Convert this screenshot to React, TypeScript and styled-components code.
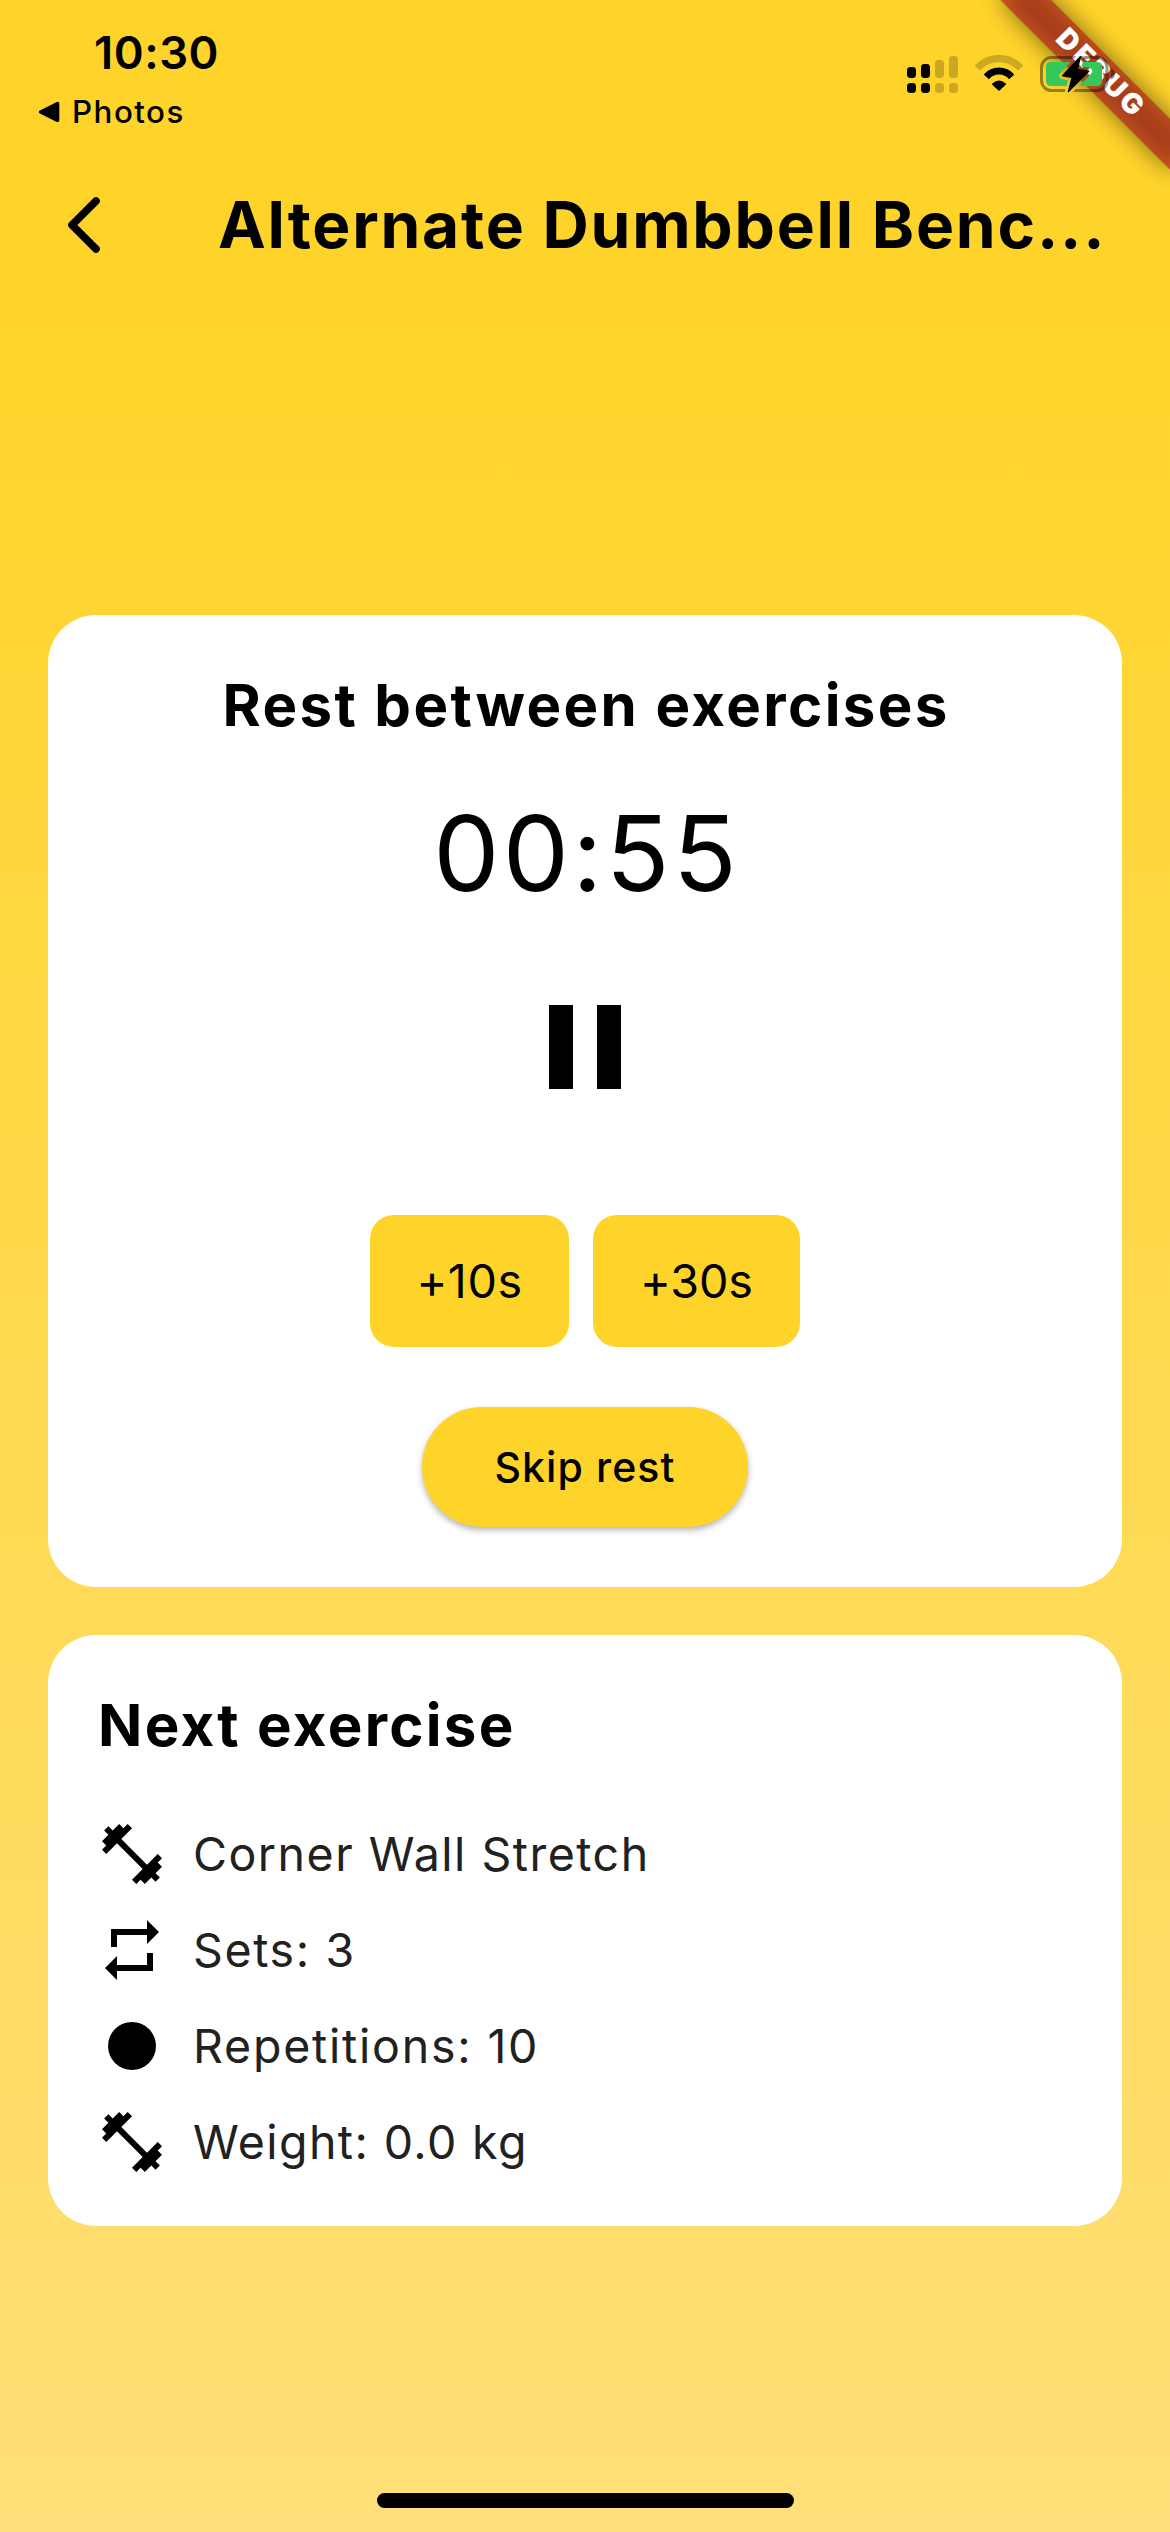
import React from "react";
import styled, { createGlobalStyle } from "styled-components";
import { MdFitnessCenter, MdPause, MdRepeat, MdFiberManualRecord } from "react-icons/md";
import type { IconType } from "react-icons";

const YELLOW = "#ffd42a";

const GlobalStyle = createGlobalStyle`
  *, *::before, *::after { box-sizing: border-box; }
  body {
    margin: 0;
    font-family: Inter, "Liberation Sans", sans-serif;
    color: #000;
  }
  button {
    border: 0;
    padding: 0;
    background: none;
    font: inherit;
    color: inherit;
  }
  svg { display: block; flex: none; }
`;

const Screen = styled.div`
  position: relative;
  width: 1170px;
  height: 2532px;
  display: flex;
  flex-direction: column;
  overflow: hidden;
  background: ${YELLOW};
`;

/* Corner banner, sits under the status icons */
const BannerCorner = styled.div`
  position: absolute;
  top: 0;
  right: 0;
  width: 280px;
  height: 280px;
  overflow: hidden;
  pointer-events: none;
`;

const BannerStrip = styled.div`
  position: absolute;
  top: 84px;
  right: -120px;
  width: 240px;
  height: 36px;
  transform-origin: 120px -84px;
  transform: rotate(45deg);

  &::before {
    content: "";
    position: absolute;
    inset: 0;
    background: rgba(0, 0, 0, 0.5);
    filter: blur(12px);
  }
`;

const BannerLabel = styled.span`
  position: relative;
  display: flex;
  align-items: center;
  justify-content: center;
  height: 100%;
  padding: 0 0 3px 6px;
  background: rgba(183, 28, 28, 0.627);
  color: #fff;
  font-size: 28.2px;
  font-weight: 900;
  line-height: 33px;
  letter-spacing: 3px;
`;

const StatusBar = styled.div`
  position: relative;
  display: flex;
  justify-content: space-between;
  align-items: flex-start;
  height: 141px;
`;

const StatusLeft = styled.div`
  display: flex;
  flex-direction: column;
  gap: 14px;
  padding: 25px 0 0 38px;
`;

const Clock = styled.div`
  padding-left: 56px;
  font-size: 45.4px;
  font-weight: 600;
  line-height: 55px;
  letter-spacing: 0.53px;
`;

const ReturnLink = styled.div`
  display: flex;
  align-items: center;
  gap: 12px;
  height: 36px;
  font-size: 31.3px;
  font-weight: 500;
  line-height: 36px;
  letter-spacing: 1.49px;
`;

const StatusIcons = styled.div`
  display: flex;
  gap: 17px;
  padding: 55px 55px 0 0;
`;

const Header = styled.header`
  position: relative;
  display: flex;
  align-items: center;
  gap: 117px;
  height: 168px;
  padding-left: 67px;
`;

const Title = styled.h1`
  margin: 0;
  font-size: 64px;
  font-weight: 700;
  line-height: 84px;
  letter-spacing: 1.79px;
  white-space: nowrap;
`;

const Body = styled.main`
  flex: 1;
  display: flex;
  flex-direction: column;
  gap: 48px;
  padding: 306px 48px 24px;
  background: linear-gradient(${YELLOW}, #ffdf78);
`;

const Card = styled.section`
  display: flex;
  flex-direction: column;
  padding: 48px;
  border-radius: 48px;
  background: #fff;
`;

const TimerCard = styled(Card)`
  align-items: center;
  padding-bottom: 60px;
`;

const CardTitle = styled.h2<{ $tracking: number }>`
  margin: 0;
  margin-right: -${(p) => p.$tracking}px;
  font-size: 58.2px;
  font-weight: 700;
  line-height: 84px;
  letter-spacing: ${(p) => p.$tracking}px;
  white-space: nowrap;
`;

const NextTitle = styled(CardTitle)`
  padding-left: 2px;
`;

const Timer = styled.div`
  margin: 40px -3.3px 56px 0;
  font-size: 105px;
  line-height: 132px;
  letter-spacing: 3.3px;
`;

const PauseButton = styled.button`
  display: flex;
  height: 144px;
`;

const AddRow = styled.div`
  display: flex;
  gap: 24px;
  margin: 96px 0 60px;
`;

const AddButton = styled.button<{ $width: number; $tracking: number }>`
  width: ${(p) => p.$width}px;
  height: 132px;
  border-radius: 24px;
  background: ${YELLOW};
  font-size: 46.7px;
  line-height: 60px;
  letter-spacing: ${(p) => p.$tracking}px;
`;

const SkipButton = styled.button`
  width: 326px;
  height: 120px;
  border-radius: 60px;
  background: ${YELLOW};
  box-shadow: 0 3px 6px rgba(0, 0, 0, 0.3);
  font-size: 41px;
  font-weight: 500;
  line-height: 60px;
  letter-spacing: 1.1px;
`;

const DetailList = styled.ul`
  display: flex;
  flex-direction: column;
  gap: 24px;
  margin: 51px 0 0;
  padding: 0;
  list-style: none;
`;

const DetailRow = styled.li<{ $tracking: number }>`
  display: flex;
  align-items: center;
  gap: 25px;
  height: 72px;
  color: #212121;
  font-size: 46.5px;
  line-height: 72px;
  letter-spacing: ${(p) => p.$tracking}px;

  svg { color: #000; }
`;

const HomeIndicator = styled.div`
  width: 417px;
  height: 15px;
  margin: auto auto 0;
  border-radius: 8px;
  background: #000;
`;

const signalColumns = [
  { x: 0, top: 12, on: true },
  { x: 14, top: 9, on: true },
  { x: 28, top: 5, on: false },
  { x: 42, top: 1, on: false },
];

function SignalIcon() {
  return (
    <svg width="51" height="38" viewBox="0 0 51 38">
      {signalColumns.map((c) => (
        <g key={c.x} opacity={c.on ? 1 : 0.2}>
          <rect x={c.x} y={c.top} width="9" height={23 - c.top} rx="3.4" />
          <rect x={c.x} y="28" width="9" height="10" rx="3.4" />
        </g>
      ))}
    </svg>
  );
}

function WifiIcon() {
  return (
    <svg width="48" height="38" viewBox="0 0 48 38" fill="none" stroke="#000">
      <path d="M2.4 13.1A29.3 29.3 0 0 1 45.6 13.1" strokeWidth="7.4" opacity="0.2" />
      <path d="M11.3 21.8A17 17 0 0 1 36.7 21.8" strokeWidth="7" />
      <path
        d="M17.8 29.2Q24 23.6 30.2 29.2L24 35Z"
        fill="#000"
        strokeWidth="1.6"
        strokeLinejoin="round"
      />
    </svg>
  );
}

const bolt = "M40.3 1.6L22.6 20.8L32.3 22.3L28.4 36.6L48.6 16.2L37.4 14.4Z";

function BatteryIcon() {
  return (
    <svg width="75" height="38" viewBox="0 0 75 38">
      <mask id="bolt-gap" maskUnits="userSpaceOnUse" x="0" y="0" width="75" height="38">
        <rect width="75" height="38" fill="#fff" />
        <path d={bolt} fill="#000" stroke="#000" strokeWidth="7" strokeLinejoin="round" />
      </mask>
      <g mask="url(#bolt-gap)">
        <rect x="1.5" y="2.5" width="65.5" height="33" rx="10" fill="none" stroke="#000" strokeOpacity="0.4" strokeWidth="3" />
        <rect x="6" y="7" width="56" height="24" rx="4.5" fill="#35c759" />
      </g>
      <path d="M71 13.5q4 1.5 4 5.5t-4 5.5z" fillOpacity="0.4" />
      <path d={bolt} stroke="#000" strokeWidth="1.4" strokeLinejoin="round" />
    </svg>
  );
}

const details: { icon: IconType; text: string; tracking: number }[] = [
  { icon: MdFitnessCenter, text: "Corner Wall Stretch", tracking: 1.5 },
  { icon: MdRepeat, text: "Sets: 3", tracking: 1.61 },
  { icon: MdFiberManualRecord, text: "Repetitions: 10", tracking: 1.78 },
  { icon: MdFitnessCenter, text: "Weight: 0.0 kg", tracking: 1.4 },
];

export default function App() {
  return (
    <>
      <GlobalStyle />
      <Screen>
        <BannerCorner>
          <BannerStrip>
            <BannerLabel>DEBUG</BannerLabel>
          </BannerStrip>
        </BannerCorner>
        <StatusBar>
          <StatusLeft>
            <Clock>10:30</Clock>
            <ReturnLink>
              <svg width="22" height="22" viewBox="0 0 22 22">
                <path d="M2.6 11L19.6 2.6V19.4Z" stroke="#000" strokeWidth="3.4" strokeLinejoin="round" />
              </svg>
              Photos
            </ReturnLink>
          </StatusLeft>
          <StatusIcons>
            <SignalIcon />
            <WifiIcon />
            <BatteryIcon />
          </StatusIcons>
        </StatusBar>
        <Header>
          <button aria-label="Back">
            <svg width="34" height="58" viewBox="0 0 34 58" fill="none" stroke="#000" strokeWidth="7.6" strokeLinecap="round" strokeLinejoin="round">
              <path d="M29 5L5 29L29 53" />
            </svg>
          </button>
          <Title>Alternate Dumbbell Benc...</Title>
        </Header>
        <Body>
          <TimerCard>
            <CardTitle $tracking={2.4}>Rest between exercises</CardTitle>
            <Timer>00:55</Timer>
            <PauseButton aria-label="Pause">
              <MdPause size={144} />
            </PauseButton>
            <AddRow>
              <AddButton $width={199} $tracking={0.56}>+10s</AddButton>
              <AddButton $width={207} $tracking={-0.12}>+30s</AddButton>
            </AddRow>
            <SkipButton>Skip rest</SkipButton>
          </TimerCard>
          <Card>
            <NextTitle $tracking={2.3}>Next exercise</NextTitle>
            <DetailList>
              {details.map(({ icon: Icon, text, tracking }) => (
                <DetailRow key={text} $tracking={tracking}>
                  <Icon size={72} />
                  {text}
                </DetailRow>
              ))}
            </DetailList>
          </Card>
          <HomeIndicator />
        </Body>
      </Screen>
    </>
  );
}
